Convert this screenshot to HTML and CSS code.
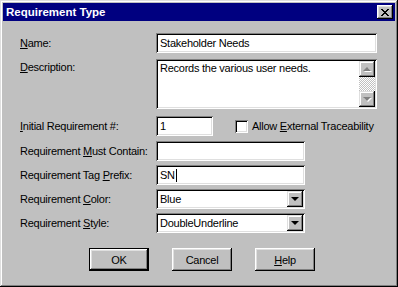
FILE: index.html
```
<!DOCTYPE html>
<html lang="en">
<head>
    <meta charset="UTF-8">
    <title>Requirement Type</title>
    <link rel="stylesheet" href="styles.css">
</head>
<body>
    <div class="window">
        <div class="titlebar">
            <span class="title">Requirement Type</span>
            <span class="close">
                <svg width="8" height="7" viewBox="0 0 8 7"><path d="M0 0h2v1h1v1h2v-1h1v-1h2v1h-1v1h-1v1h-1v1h1v1h1v1h1v1h-2v-1h-1v-1h-2v1h-1v1h-2v-1h1v-1h1v-1h1v-1h-1v-1h-1v-1h-1z" fill="#000"/></svg>
            </span>
        </div>
        <div class="content">
            <div class="row row-name">
                <label class="lbl"><u>N</u>ame:</label>
                <div class="field wide">Stakeholder Needs</div>
            </div>
            <div class="row row-desc">
                <label class="lbl top"><u>D</u>escription:</label>
                <div class="field wide memo">
                    <div class="memo-text">Records the various user needs.</div>
                    <div class="vscroll">
                        <span class="sbtn"><i class="tri up grey"></i></span>
                        <span class="track"></span>
                        <span class="sbtn"><i class="tri down grey"></i></span>
                    </div>
                </div>
            </div>
            <div class="row row-init">
                <label class="lbl"><u>I</u>nitial Requirement #:</label>
                <div class="field small">1</div>
                <span class="check"></span>
                <span class="check-label">Allow <u>E</u>xternal Traceability</span>
            </div>
            <div class="row row-tight">
                <label class="lbl">Requirement <u>M</u>ust Contain:</label>
                <div class="field mid"></div>
            </div>
            <div class="row row-tight">
                <label class="lbl">Requirement Tag <u>P</u>refix:</label>
                <div class="field mid">SN<span class="caret"></span></div>
            </div>
            <div class="row row-tight">
                <label class="lbl">Requirement <u>C</u>olor:</label>
                <div class="field mid combo">
                    <span class="combo-text">Blue</span>
                    <span class="sbtn"><i class="tri down"></i></span>
                </div>
            </div>
            <div class="row row-tight">
                <label class="lbl">Requirement <u>S</u>tyle:</label>
                <div class="field mid combo">
                    <span class="combo-text">DoubleUnderline</span>
                    <span class="sbtn"><i class="tri down"></i></span>
                </div>
            </div>
            <div class="buttons">
                <button class="btn default">OK</button>
                <button class="btn">Cancel</button>
                <button class="btn"><u>H</u>elp</button>
            </div>
        </div>
    </div>
</body>
</html>
```
FILE: styles.css
```
body {
    margin: 0;
    padding: 0;
    font-family: "Liberation Sans", Arial, sans-serif;
    font-size: 11px;
    letter-spacing: -0.25px;
    color: #000;
    background-color: #c0c0c0;
}
.window {
    width: 398px;
    height: 287px;
    box-sizing: border-box;
    padding: 3px;
    background-color: #c0c0c0;
    box-shadow: inset -1px -1px #000, inset 1px 1px #dfdfdf, inset -2px -2px #808080, inset 2px 2px #fff;
}
.titlebar {
    height: 18px;
    background-color: #000080;
    display: flex;
    align-items: center;
    justify-content: space-between;
    padding: 0 2px 0 3px;
}
.title {
    color: #fff;
    font-weight: bold;
    font-size: 11.5px;
    letter-spacing: 0;
}
.close {
    width: 16px;
    height: 14px;
    background-color: #c0c0c0;
    display: flex;
    align-items: center;
    justify-content: center;
    box-shadow: inset -1px -1px #000, inset 1px 1px #fff, inset -2px -2px #808080, inset 2px 2px #dfdfdf;
}
.close svg {
    display: block;
}
.content {
    padding: 12px 0 0 17px;
}
.row {
    display: flex;
    align-items: center;
}
.row-desc {
    margin-top: 6px;
    align-items: flex-start;
}
.row-init {
    margin-top: 7px;
}
.row-tight {
    margin-top: 5px;
}
.row-tight + .row-tight {
    margin-top: 4px;
}
.lbl {
    width: 136px;
    flex: none;
}
.lbl.top {
    padding-top: 2px;
}
.field {
    height: 20px;
    box-sizing: border-box;
    padding: 2px 4px;
    background-color: #fff;
    display: flex;
    align-items: center;
    box-shadow: inset 1px 1px #808080, inset -1px -1px #fff, inset 2px 2px #000, inset -2px -2px #dfdfdf;
}
.wide {
    width: 221px;
}
.small {
    width: 57px;
}
.mid {
    width: 149px;
}
.memo {
    height: 50px;
    padding: 2px;
    align-items: stretch;
}
.memo-text {
    flex: 1;
    padding: 1px 2px;
}
.vscroll {
    width: 16px;
    display: flex;
    flex-direction: column;
}
.track {
    flex: 1;
    background: repeating-conic-gradient(#c0c0c0 0 25%, #fff 0 50%) 0 0 / 2px 2px;
}
.sbtn {
    width: 16px;
    height: 16px;
    flex: none;
    box-sizing: border-box;
    background-color: #c0c0c0;
    display: flex;
    align-items: center;
    justify-content: center;
    box-shadow: inset -1px -1px #000, inset 1px 1px #dfdfdf, inset -2px -2px #808080, inset 2px 2px #fff;
}
.tri {
    width: 0;
    height: 0;
    border-left: 4px solid transparent;
    border-right: 4px solid transparent;
}
.tri.down {
    border-top: 4px solid #000;
}
.tri.up {
    border-bottom: 4px solid #000;
}
.tri.grey.up {
    border-bottom-color: #808080;
    filter: drop-shadow(1px 1px 0 #fff);
}
.tri.grey.down {
    border-top-color: #808080;
    filter: drop-shadow(1px 1px 0 #fff);
}
.combo {
    padding: 2px 2px 2px 4px;
    justify-content: space-between;
}
.caret {
    width: 1px;
    height: 13px;
    margin-left: 1px;
    background-color: #000;
}
.check {
    width: 13px;
    height: 13px;
    margin-left: 22px;
    background-color: #fff;
    box-shadow: inset 1px 1px #808080, inset -1px -1px #fff, inset 2px 2px #000, inset -2px -2px #dfdfdf;
}
.check-label {
    margin-left: 4px;
}
.buttons {
    display: flex;
    gap: 23px;
    margin: 15px 0 0 69px;
}
.btn {
    width: 60px;
    height: 23px;
    padding: 0;
    border: none;
    background-color: #c0c0c0;
    font-family: inherit;
    font-size: 11px;
    letter-spacing: -0.25px;
    color: #000;
    box-shadow: inset -1px -1px #000, inset 1px 1px #fff, inset -2px -2px #808080, inset 2px 2px #dfdfdf;
}
.btn.default {
    box-shadow: inset 0 0 0 1px #000, inset -2px -2px #000, inset 2px 2px #fff, inset -3px -3px #808080, inset 3px 3px #dfdfdf;
}
```
